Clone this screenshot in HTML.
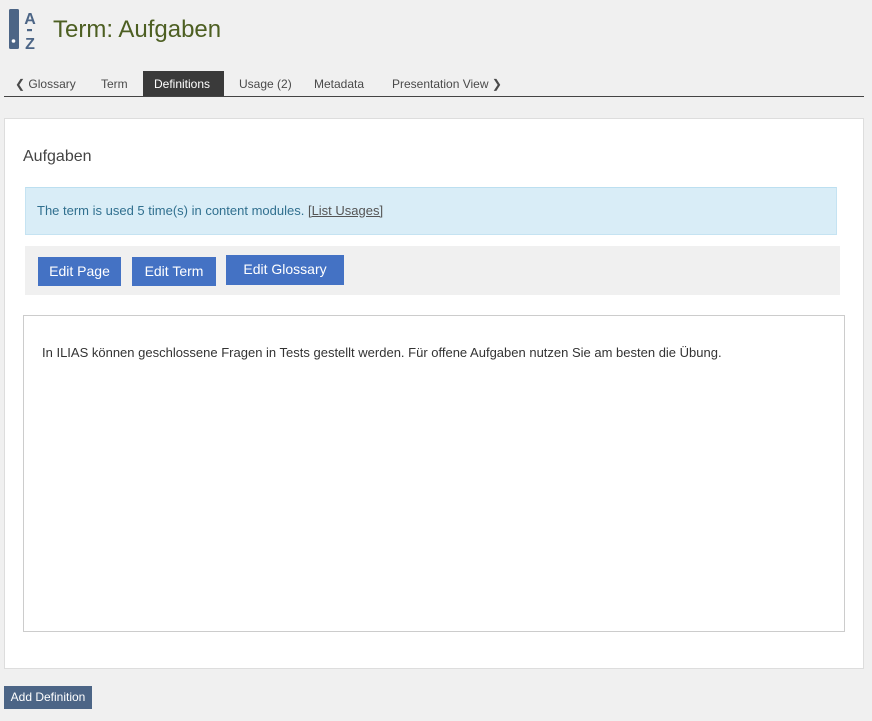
<!DOCTYPE html>
<html><head><style>
body{margin:0;width:872px;height:721px;background:#f0f0f0;font-family:"Liberation Sans",sans-serif;position:relative;overflow:hidden}
.a{position:absolute}
.tab{position:absolute;top:77px;font-size:12px;color:#4a4a4a}
.btn{position:absolute;background:#4472c4;color:#fff;font-size:14px;text-align:center;box-sizing:border-box}
</style></head><body>
<svg class="a" style="left:9px;top:9px" width="30" height="41" viewBox="0 0 30 41">
<rect x="0" y="0" width="10" height="40" rx="1.5" fill="#4c6586"/>
<circle cx="4.5" cy="32" r="1.8" fill="#fff"/>
<text x="21" y="15" font-size="16" font-weight="bold" fill="#4c6586" text-anchor="middle" font-family="Liberation Sans">A</text>
<rect x="18" y="20" width="5" height="2.2" fill="#4c6586"/>
<text x="21" y="40" font-size="16" font-weight="bold" fill="#4c6586" text-anchor="middle" font-family="Liberation Sans">Z</text>
</svg>
<div class="a" style="left:53px;top:16px;font-size:24px;color:#4d5f22">Term: Aufgaben</div>
<div class="tab" style="left:15px">❮ Glossary</div>
<div class="tab" style="left:101px">Term</div>
<div class="a" style="left:143px;top:71px;width:81px;height:25px;background:#3a3a3a"></div>
<div class="tab" style="left:154px;color:#fff">Definitions</div>
<div class="tab" style="left:239px">Usage (2)</div>
<div class="tab" style="left:314px">Metadata</div>
<div class="tab" style="left:392px">Presentation View ❯</div>
<div class="a" style="left:4px;top:96px;width:860px;height:1px;background:#444"></div>
<div class="a" style="left:4px;top:118px;width:858px;height:549px;background:#fff;border:1px solid #ddd"></div>
<div class="a" style="left:23px;top:148px;font-size:16px;color:#444">Aufgaben</div>
<div class="a" style="left:25px;top:187px;width:810px;height:46px;background:#d9edf7;border:1px solid #c5e3f2;border-top-color:#bcdff0"></div>
<div class="a" style="left:37px;top:203px;font-size:13px;color:#31708f">The term is used 5 time(s) in content modules. <span style="text-decoration:underline;color:#555">[List Usages]</span></div>
<div class="a" style="left:25px;top:246px;width:815px;height:49px;background:#f0f0f0"></div>
<div class="btn" style="left:38px;top:257px;width:83px;height:29px;line-height:29px">Edit Page</div>
<div class="btn" style="left:132px;top:257px;width:84px;height:29px;line-height:29px">Edit Term</div>
<div class="btn" style="left:226px;top:255px;width:118px;height:30px;line-height:29px">Edit Glossary</div>
<div class="a" style="left:23px;top:315px;width:820px;height:315px;border:1px solid #ccc;background:#fff"></div>
<div class="a" style="left:42px;top:345px;font-size:13px;color:#333">In ILIAS können geschlossene Fragen in Tests gestellt werden. Für offene Aufgaben nutzen Sie am besten die Übung.</div>
<div class="a" style="left:4px;top:686px;width:88px;height:23px;background:#4c6586;color:#fff;font-size:12px;line-height:23px;text-align:center">Add Definition</div>
</body></html>
